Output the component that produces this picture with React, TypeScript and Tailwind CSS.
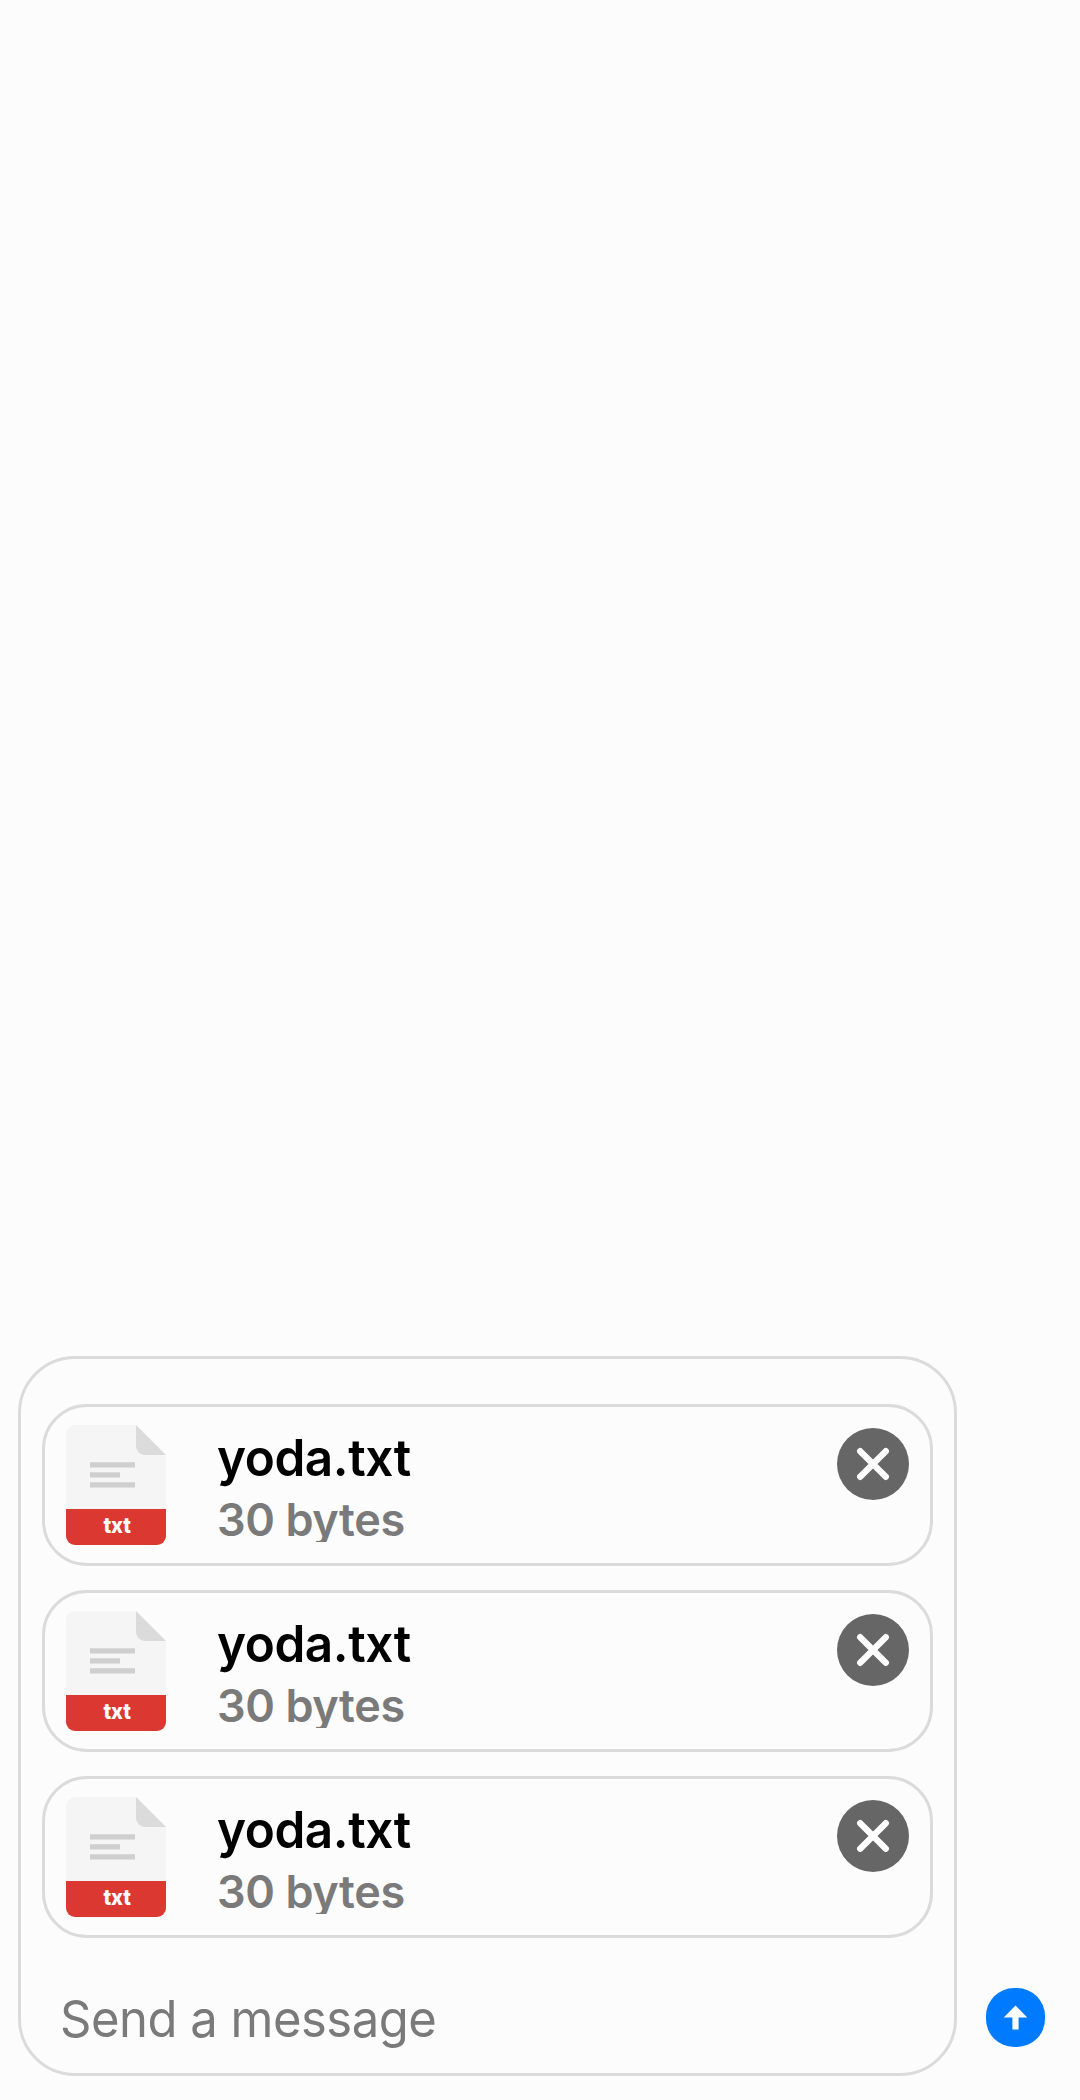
const attachments = [
  { id: 1, name: "yoda.txt", size: "30 bytes", ext: "txt" },
  { id: 2, name: "yoda.txt", size: "30 bytes", ext: "txt" },
  { id: 3, name: "yoda.txt", size: "30 bytes", ext: "txt" },
];

function FileIcon({ ext }: { ext: string }) {
  return (
    <svg width="100" height="120" viewBox="0 0 100 120" className="mt-[18px] shrink-0">
      <path d="M9 0H70L100 30V84H0V9A9 9 0 0 1 9 0Z" fill="#f5f5f5" />
      <path d="M70 0L100 30H79A9 9 0 0 1 70 21Z" fill="#dbdbdb" />
      <path d="M24 37.2h45v5.2H24zM24 47.2h30v5.2H24zM24 57.3h45v5.2H24z" fill="#cfcfcf" />
      <path d="M0 84H100V111A9 9 0 0 1 91 120H9A9 9 0 0 1 0 111Z" fill="#db3832" />
      <text
        x="51.2"
        y="107.7"
        textAnchor="middle"
        textLength="27.6"
        lengthAdjust="spacingAndGlyphs"
        fill="#fff"
        className="font-['Inter',sans-serif] text-[21.5px] font-extrabold"
      >
        {ext}
      </text>
    </svg>
  );
}

function RemoveButton() {
  return (
    <button aria-label="Remove attachment" className="mt-[21px] size-[72px] shrink-0 rounded-full bg-[#666666]">
      <svg viewBox="0 0 72 72" className="size-[72px]" fill="none" stroke="#fff" strokeWidth="6.3" strokeLinecap="round">
        <path d="M23.2 23.2L48.8 48.8M48.8 23.2L23.2 48.8" />
      </svg>
    </button>
  );
}

function AttachmentCard({ name, size, ext }: { name: string; size: string; ext: string }) {
  return (
    <div className="flex h-[162px] items-start rounded-[45px] border-[3px] border-[#dbdbdb] px-[21px]">
      <FileIcon ext={ext} />
      <div className="mt-5 ml-[51px] flex-1 whitespace-nowrap">
        <div className="h-[65px] origin-left scale-x-[0.97] text-[51px] leading-[61px] font-semibold tracking-[-0.45px] text-black">
          {name}
        </div>
        <div className="h-[50px] overflow-hidden text-[45px] leading-[55px] font-semibold tracking-[-0.4px] text-[#7a7a7a]">
          {size}
        </div>
      </div>
      <RemoveButton />
    </div>
  );
}

export default function App() {
  return (
    <main className="flex h-[2100px] w-[1080px] items-end bg-[#fcfcfc] pb-6 pl-[18px] font-['Inter',sans-serif]">
      <section className="flex h-[720px] w-[939px] flex-col rounded-[57px] border-[3px] border-[#dbdbdb] px-[21px] pt-[45px]">
        <div className="flex flex-col gap-6">
          {attachments.map((a) => (
            <AttachmentCard key={a.id} name={a.name} size={a.size} ext={a.ext} />
          ))}
        </div>
        <p className="mt-[50px] ml-[18px] origin-left scale-x-[0.96] text-[51px] leading-[61px] tracking-[-0.5px] text-[#7a7a7a]">
          Send a message
        </p>
      </section>
      <button aria-label="Send" className="mb-[29px] ml-[29px] size-[59px] rounded-[28px] bg-[#007aff]">
        <svg viewBox="0 0 59 59" className="size-[59px]" fill="#fcfcfc">
          <path d="M29.5 17.6L41.3 29.5H32.6V41.6H26.4V29.5H17.7Z" />
        </svg>
      </button>
    </main>
  );
}
